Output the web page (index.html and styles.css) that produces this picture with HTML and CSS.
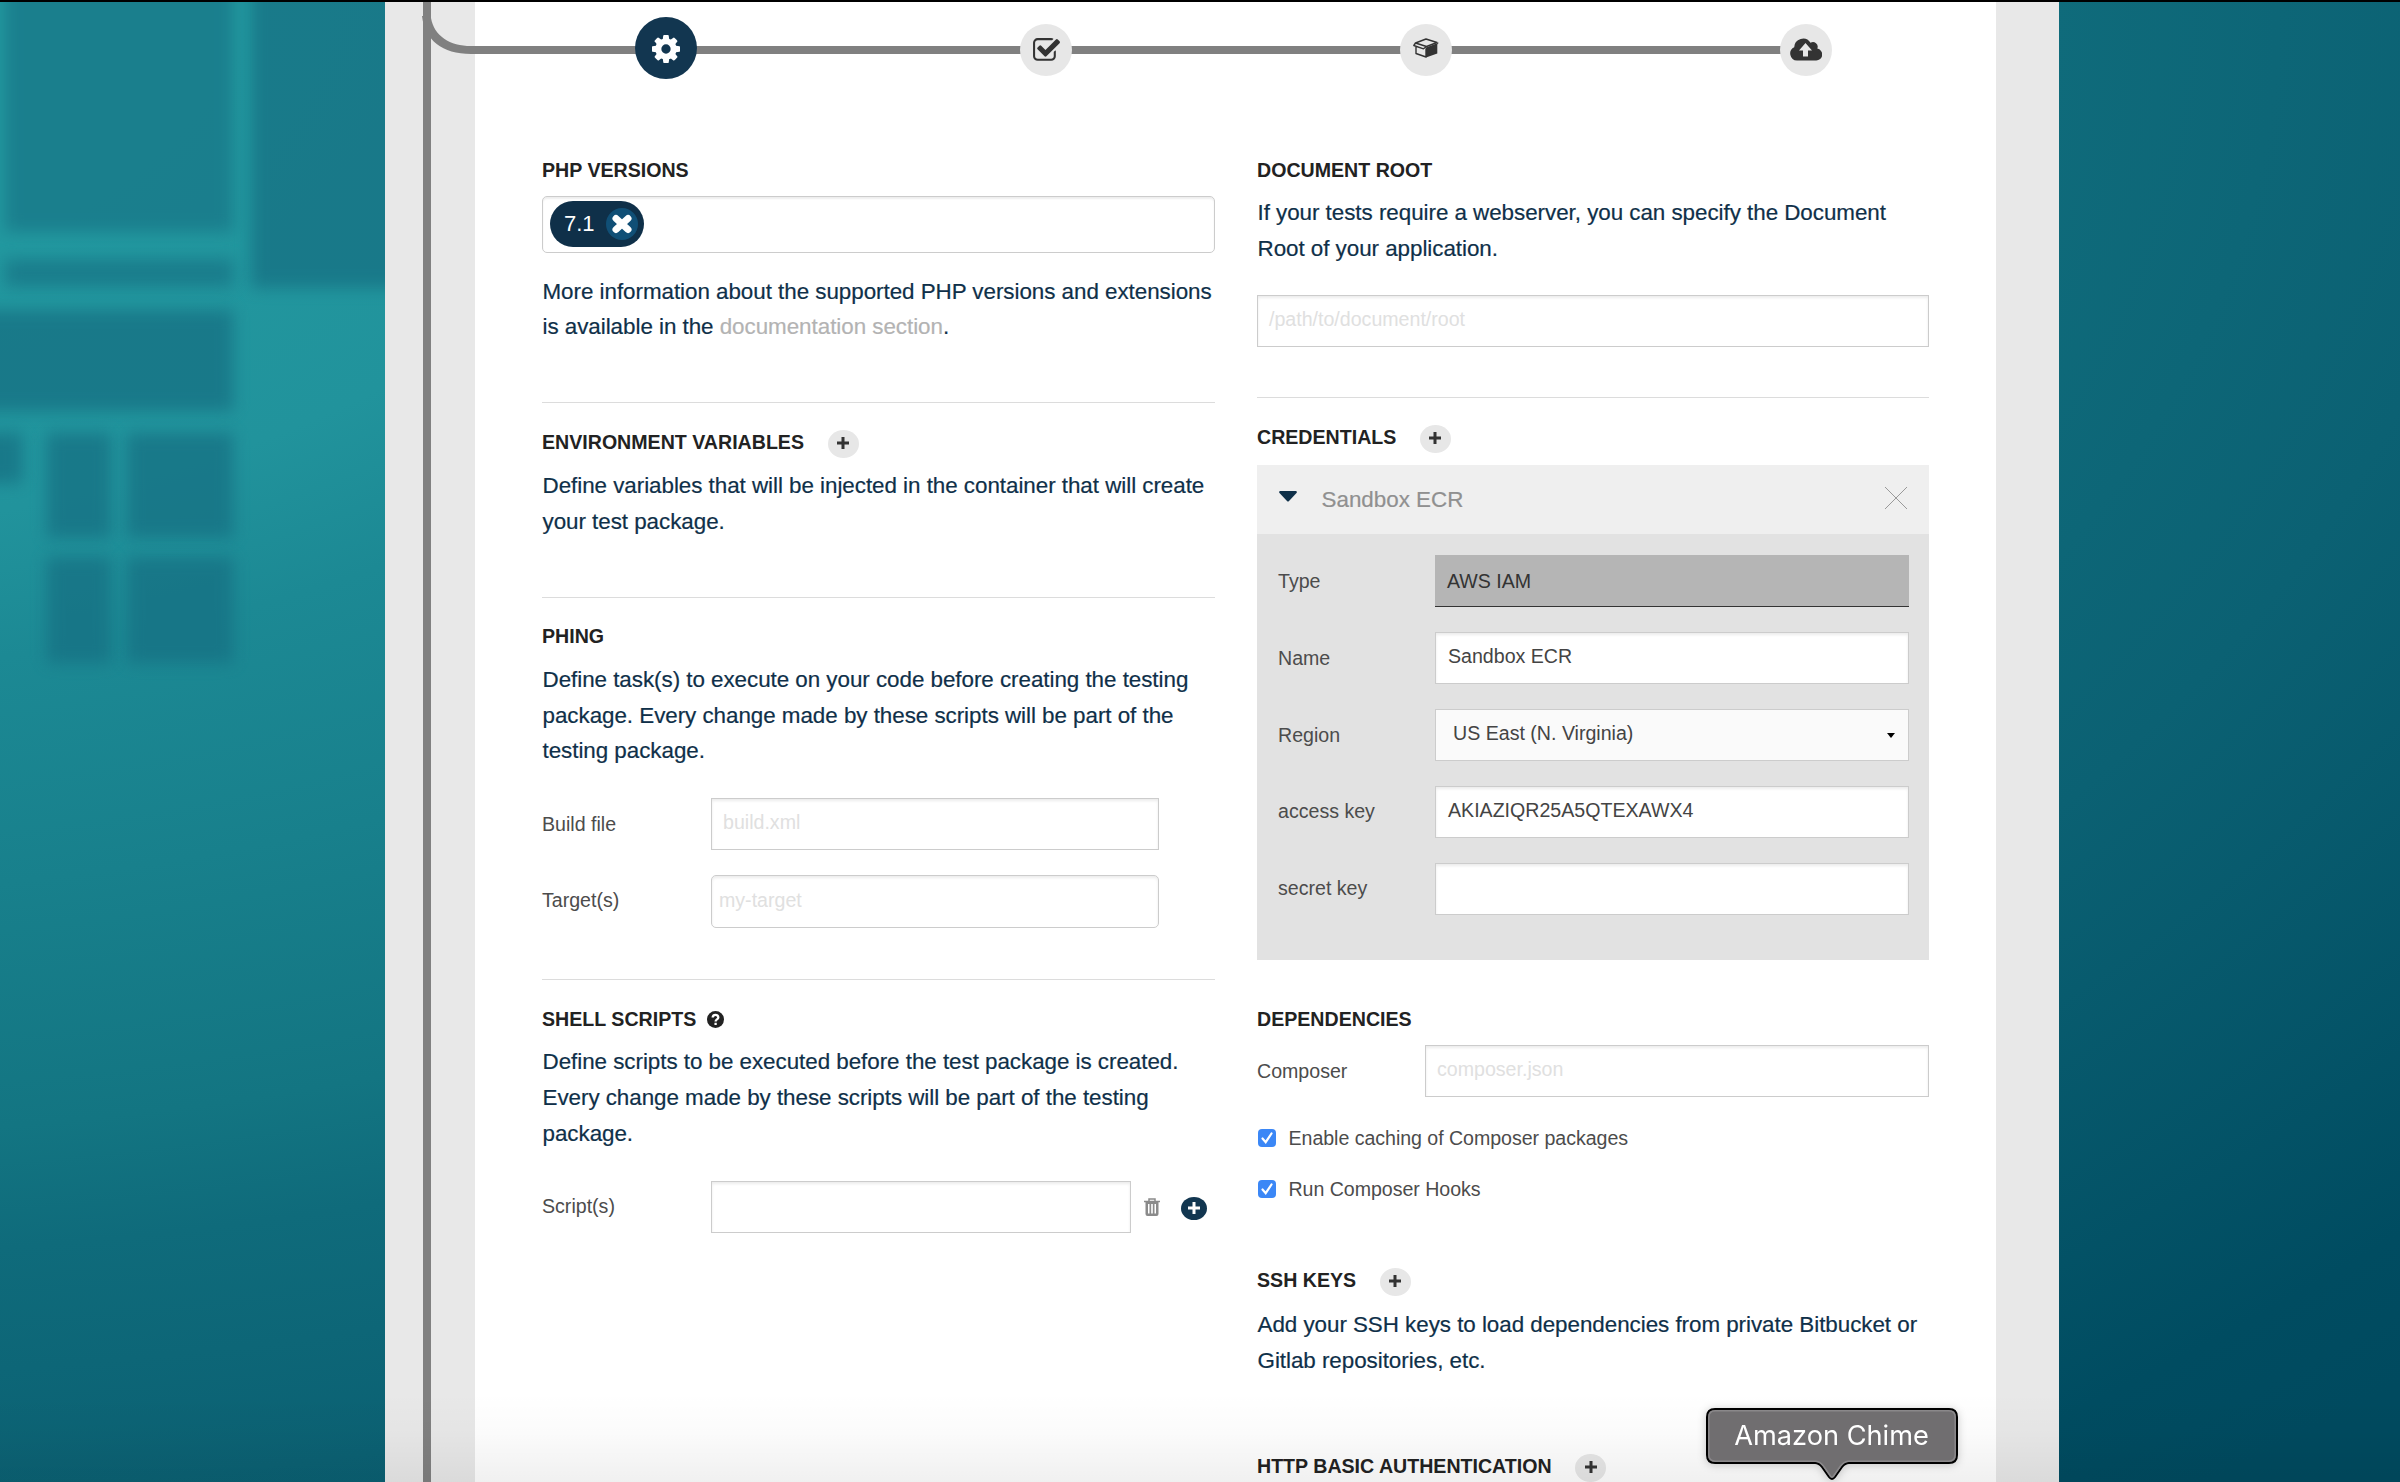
FILE: index.html
```html
<!DOCTYPE html>
<html lang="en">
<head>
<meta charset="utf-8">
<title>Project setup</title>
<link rel="stylesheet" href="styles.css">
</head>
<body>
<div class="backdrop" aria-hidden="true">
  <span class="tile tile-a"></span>
  <span class="tile tile-b"></span>
  <span class="tile tile-c"></span>
  <span class="tile tile-d"></span>
  <span class="tile tile-e"></span>
  <span class="tile tile-f"></span>
  <span class="tile tile-g"></span>
  <span class="tile tile-h"></span>
  <span class="tile tile-i"></span>
</div>

<div class="shell">
  <div class="rail"></div>
  <svg class="branch" viewBox="0 0 56 44" width="56" height="44"><path d="M0 4C3 28 20 42 49 42H56V34H49C28 34 12 24 9 6V0H1V4Z"/></svg>
  <main class="panel">
    <nav class="steps">
      <span class="step step-active"><svg width="28" height="28" viewBox="0 128 1536 1536"><path d="M1024 896q0-106-75-181t-181-75-181 75-75 181 75 181 181 75 181-75 75-181zm512-109v222q0 12-8 23t-20 13l-185 28q-19 54-39 91 35 50 107 138 10 12 10 25t-9 23q-27 37-99 108t-94 71q-12 0-26-9l-138-108q-44 23-91 38-16 136-29 186-7 28-36 28h-222q-14 0-24.500-8.500t-11.500-21.500l-28-184q-49-16-90-37l-141 107q-10 9-25 9-14 0-25-11-126-114-165-168-7-10-7-23 0-12 8-23 15-21 51-66.500t54-70.500q-27-50-41-99l-183-27q-13-2-21-12.500t-8-23.500v-222q0-12 8-23t19-13l186-28q14-46 39-92-40-57-107-138-10-12-10-24 0-10 9-23 26-36 98.500-107.500t94.500-71.500q13 0 26 10l138 107q44-23 91-38 16-136 29-186 7-28 36-28h222q14 0 24.500 8.500t11.500 21.500l28 184q49 16 90 37l142-107q9-9 24-9 13 0 25 10 129 119 165 170 7 8 7 22 0 12-8 23-15 21-51 66.500t-54 70.500q26 50 41 98l183 28q13 2 21 12.500t8 23.500z"/></svg></span>
      <span class="step"><svg width="29" height="29" viewBox="0 0 1792 1792"><path d="M1472 930v318q0 119-84.500 203.500t-203.500 84.500h-832q-119 0-203.500-84.500t-84.500-203.500v-832q0-119 84.500-203.500t203.500-84.500h832q63 0 117 25 15 7 18 23 3 17-9 29l-49 49q-10 10-23 10-3 0-9-2-23-6-45-6h-832q-66 0-113 47t-47 113v832q0 66 47 113t113 47h832q66 0 113-47t47-113v-254q0-13 9-22l64-64q10-10 23-10 6 0 12 3 20 8 20 29zm231-489l-814 814q-24 24-57 24t-57-24l-430-430q-24-24-24-57t24-57l110-110q24-24 57-24t57 24l263 263 647-647q24-24 57-24t57 24l110 110q24 24 24 57t-24 57z"/></svg></span>
      <span class="step step-box"><svg width="26" height="20" viewBox="0 0 26 20"><path d="M2.500 5 13 1 24 4.500 13.500 8.500ZM2.500 5 .8 7.500 10.500 10.800 13.500 8.500M3 8.500V15.500L13 19V10.500" fill="none" stroke="#333" stroke-width="1.400" stroke-linejoin="round"/><path d="M13 9.500 23.500 5.500 26 4.500 24.300 6.500V15.500L13 19.600Z"/></svg></span>
      <span class="step step-cloud"><svg width="32" height="24" viewBox="0 0 32 24"><path fill-rule="evenodd" d="M7 23.500A7 7 0 0 1 4.200 10.200A8.800 8.800 0 0 1 20.500 5.800A4.700 4.700 0 0 1 27.300 11.600A6 6 0 0 1 26 23.500ZM15.500 6 9 13.500H13V19.500H18V13.500H22Z"/></svg></span>
    </nav>

    <div class="columns">
      <div class="column">
        <section class="block block-php">
          <h2 class="title">PHP VERSIONS</h2>
          <div class="tags"><span class="tag">7.1<button class="tag-remove" aria-label="Remove"><svg width="22" height="20" viewBox="0 0 22 20"><path d="M5 4.500 17 15.500M17 4.500 5 15.500" stroke="#fff" stroke-width="7" stroke-linecap="round"/></svg></button></span></div>
          <p class="text">More information about the supported PHP versions and extensions<br>is available in the <a class="link">documentation section</a>.</p>
        </section>

        <section class="block block-env">
          <h2 class="title">ENVIRONMENT VARIABLES <button class="add"><svg width="12" height="12" viewBox="0 0 12 12"><path d="M6 0V12M0 6H12"/></svg></button></h2>
          <p class="text">Define variables that will be injected in the container that will create<br>your test package.</p>
        </section>

        <section class="block block-phing">
          <h2 class="title">PHING</h2>
          <p class="text">Define task(s) to execute on your code before creating the testing<br>package. Every change made by these scripts will be part of the<br>testing package.</p>
          <div class="field field-phing"><label class="label">Build file</label><div class="input placeholder">build.xml</div></div>
          <div class="field field-phing field-target"><label class="label">Target(s)</label><div class="input input-round placeholder">my-target</div></div>
        </section>

        <section class="block block-last">
          <h2 class="title">SHELL SCRIPTS <svg class="help" width="17" height="17" viewBox="0 0 17 17"><circle cx="8.500" cy="8.500" r="8.500" fill="#222"/><path d="M5.700 6.600C5.700 3 11.300 3 11.300 6.400C11.300 8.500 8.600 8.300 8.600 10.500M8.600 11.800V14" fill="none" stroke="#fff" stroke-width="2.300"/></svg></h2>
          <p class="text">Define scripts to be executed before the test package is created.<br>Every change made by these scripts will be part of the testing<br>package.</p>
          <div class="field field-script"><label class="label">Script(s)</label><div class="input"></div>
            <svg class="trash" width="16" height="18" viewBox="0 0 16 18"><path fill="none" stroke="#8a8a8a" stroke-width="1.500" d="M0 3.500H16M5 3V1H11V3"/><path fill="#8a8a8a" fill-rule="evenodd" d="M1.500 4H14.500V16Q14.500 18 12.500 18H3.500Q1.500 18 1.500 16ZM4 6V15.500H5.500V6ZM7.200 6V15.500H8.800V6ZM10.500 6V15.500H12V6Z"/></svg>
            <button class="add add-dark"><svg width="12" height="12" viewBox="0 0 12 12"><path d="M6 0V12M0 6H12"/></svg></button>
          </div>
        </section>
      </div>

      <div class="column">
        <section class="block block-root">
          <h2 class="title">DOCUMENT ROOT</h2>
          <p class="text">If your tests require a webserver, you can specify the Document<br>Root of your application.</p>
          <div class="input placeholder">/path/to/document/root</div>
        </section>

        <section class="block block-credentials">
          <h2 class="title">CREDENTIALS <button class="add"><svg width="12" height="12" viewBox="0 0 12 12"><path d="M6 0V12M0 6H12"/></svg></button></h2>
          <div class="card">
            <div class="card-head">
              <svg class="caret" width="18" height="11" viewBox="0 0 18 11"><path d="M1 0H17Q18.500 .5 17.500 2L10 10Q9 11 8 10L.5 2Q-.5 .5 1 0Z" fill="#0f3049"/></svg>
              <span class="card-name">Sandbox ECR</span>
              <svg class="close" width="22" height="22" viewBox="0 0 22 22"><path d="M0 0 22 22M22 0 0 22" stroke="#999" stroke-width="1"/></svg>
            </div>
            <div class="card-body">
              <div class="field"><label class="label">Type</label><div class="input input-locked">AWS IAM</div></div>
              <div class="field"><label class="label">Name</label><div class="input">Sandbox ECR</div></div>
              <div class="field"><label class="label">Region</label><div class="input input-select">US East (N. Virginia)<svg width="8" height="5" viewBox="0 0 8 5"><path d="M0 0H8L4 5Z"/></svg></div></div>
              <div class="field field-key"><label class="label">access key</label><div class="input">AKIAZIQR25A5QTEXAWX4</div></div>
              <div class="field field-key"><label class="label">secret key</label><div class="input"></div></div>
            </div>
          </div>
        </section>

        <section class="block block-deps">
          <h2 class="title">DEPENDENCIES</h2>
          <div class="field field-composer"><label class="label">Composer</label><div class="input placeholder">composer.json</div></div>
          <label class="check"><span class="box"><svg width="18" height="18" viewBox="0 0 18 18"><path d="M4.500 9.500 7.700 13.200 13.500 4.500"/></svg></span>Enable caching of Composer packages</label>
          <label class="check"><span class="box"><svg width="18" height="18" viewBox="0 0 18 18"><path d="M4.500 9.500 7.700 13.200 13.500 4.500"/></svg></span>Run Composer Hooks</label>
        </section>

        <section class="block block-ssh">
          <h2 class="title">SSH KEYS <button class="add"><svg width="12" height="12" viewBox="0 0 12 12"><path d="M6 0V12M0 6H12"/></svg></button></h2>
          <p class="text">Add your SSH keys to load dependencies from private Bitbucket or<br>Gitlab repositories, etc.</p>
        </section>

        <section class="block block-last">
          <h2 class="title">HTTP BASIC AUTHENTICATION <button class="add"><svg width="12" height="12" viewBox="0 0 12 12"><path d="M6 0V12M0 6H12"/></svg></button></h2>
        </section>
      </div>
    </div>
  </main>
</div>

<div class="dock-shade"></div>
<div class="dock-tip">
  <svg class="dock-tip-shape" width="252" height="74" viewBox="0 0 252 74"><path d="M9 1H243Q251 1 251 9V47Q251 55 243 55H143Q139 55 136 59L129 69Q126 73 123 69L116 59Q113 55 109 55H9Q1 55 1 47V9Q1 1 9 1Z" fill="#706e70" stroke="#000" stroke-width="2"/><path d="M9.500 2.800H242.500Q249.200 2.800 249.200 9.500V46.500Q249.200 53.200 242.500 53.200H142Q138 53.500 134.500 58L127.500 68Q126 70 124.500 68L117.500 58Q114 53.500 110 53.200H9.500Q2.800 53.200 2.800 46.500V9.500Q2.800 2.800 9.500 2.800Z" fill="none" stroke="#8a888a" stroke-width="1.500"/></svg>
  <span class="dock-tip-label">Amazon Chime</span>
</div>
</body>
</html>
```
FILE: styles.css
```css
* { box-sizing: border-box; }

body {
  margin: 0;
  height: 1482px;
  position: relative;
  overflow: hidden;
  font-family: "Liberation Sans", Arial, sans-serif;
  font-size: 19.6px;
  line-height: 28px;
  color: #444;
  background: #0a5f70;
}

button {
  margin: 0;
  padding: 0;
  border: 0;
}

/* Blurred decorative backdrop */
.backdrop {
  position: absolute;
  inset: 0;
  overflow: hidden;
  background:
    radial-gradient(3780px 2000px at -330px 0, #22989f 0%, #22989f 15%, #21939c 27%, #1c8994 34%, #18808c 45%, #137582 57%, #0f6b7b 63%, #0b6173 75%, #004c61 95%, #004a5f 100%);
}

.tile {
  position: absolute;
  background: #167083;
  opacity: .74;
  filter: blur(8px);
}

.tile-a { left: 5px; top: -20px; width: 228px; height: 252px; opacity: .62; }
.tile-b { left: 251px; top: -20px; width: 200px; height: 308px; }
.tile-c { left: 5px; top: 259px; width: 228px; height: 28px; opacity: .66; }
.tile-d { left: -20px; top: 310px; width: 253px; height: 101px; }
.tile-e { left: -20px; top: 433px; width: 42px; height: 50px; }
.tile-f { left: 47px; top: 433px; width: 64px; height: 105px; }
.tile-g { left: 127px; top: 433px; width: 106px; height: 105px; }
.tile-h { left: 47px; top: 557px; width: 64px; height: 106px; }
.tile-i { left: 127px; top: 557px; width: 106px; height: 106px; }

.shell {
  position: relative;
  height: 1482px;
  margin: 0 341px 0 385px;
  padding: 0 63px 0 90px;
  background: #e8e8e8;
}

.rail {
  position: absolute;
  left: 38px;
  top: 0;
  width: 8px;
  height: 100%;
  background: #808080;
}

.branch {
  position: absolute;
  left: 37px;
  top: 12px;
  fill: #808080;
}

.panel {
  height: 1482px;
  background: #fff;
  overflow: hidden;
}

/* Top rule of the browser viewport */
body::after {
  content: "";
  position: absolute;
  left: 0;
  top: 0;
  width: 100%;
  height: 2px;
  background: #000;
}

.steps {
  display: flex;
  align-items: center;
  justify-content: space-between;
  height: 131px;
  padding: 0 164px 31px 160px;
  background: linear-gradient(#808080, #808080) 0 46px / 1331px 8px no-repeat;
}

.step {
  display: flex;
  align-items: center;
  justify-content: center;
  width: 52px;
  height: 52px;
  border-radius: 50%;
  background: #e7e7e7;
  fill: #333;
}

.step-active {
  width: 62px;
  height: 62px;
  margin-top: -4px;
  margin-right: -5px;
  padding: 1px 1px 0 0;
  background: #123650;
  fill: #fff;
}

.step-box { padding-bottom: 5px; }
.step-cloud { padding-bottom: 2px; }

.columns {
  display: grid;
  grid-template-columns: 673px 672px;
  column-gap: 42px;
  padding-left: 67px;
}

.block {
  padding-top: 25px;
  border-bottom: 1px solid #dcdcdc;
}

.block-php { height: 272px; }
.block-env { height: 195px; }
.block-phing { height: 382px; padding-top: 24px; }
.block-root { height: 267px; }
.block-credentials { height: 582px; border: 0; }
.block-deps { height: 261px; border: 0; }
.block-ssh { height: 186px; border: 0; }
.block-last { border: 0; }

.title {
  display: flex;
  align-items: center;
  height: 28px;
  margin: 0;
  font-size: 19.6px;
  line-height: 28px;
  font-weight: bold;
  color: #222;
  white-space: nowrap;
}

.add {
  display: flex;
  align-items: center;
  justify-content: center;
  width: 31px;
  height: 28px;
  margin: 3px 0 0 23.5px;
  padding-bottom: 2px;
  border-radius: 50%;
  background: #e7e7e7;
}

.add path { stroke: #333; stroke-width: 3; fill: none; }

.add-dark {
  width: 26px;
  height: 23px;
  margin: 4px 0 0 21px;
  background: #123650;
}

.add-dark path { stroke: #fff; }

.help { margin-left: 11px; }

.text {
  margin: 12px 0 0;
  padding-left: .5px;
  font-size: 22.4px;
  line-height: 35.7px;
  letter-spacing: -.04px;
  color: #0f3049;
  white-space: nowrap;
  -webkit-text-stroke: .2px currentColor;
}

.block-root .text { margin-top: 11px; }
.block-last .text {
  margin-top: 11px;
  line-height: 35.84px;
}
.block-ssh .text { margin-top: 13px; }

.link { color: #b3b3b3; }

.tags {
  height: 57px;
  margin-top: 12px;
  padding: 4px 7px;
  border: 1px solid #ccc;
  border-radius: 5px;
  background: #fff;
  box-shadow: inset 0 2px 2px rgba(0, 0, 0, .07);
}

.block .tags + .text { margin-top: 20.6px; }

.tag {
  display: flex;
  align-items: center;
  justify-content: space-between;
  width: 94px;
  height: 46px;
  padding: 0 6px 0 14px;
  border-radius: 23px;
  background: #0f3049;
  color: #fff;
  font-size: 22px;
  line-height: 42px;
}

.tag-remove {
  display: flex;
  align-items: center;
  justify-content: center;
  width: 32px;
  height: 32px;
  border-radius: 50%;
  background: #104f76;
}

.input {
  height: 52px;
  padding: 8px 11px 8px 12px;
  border: 1px solid #ccc;
  background: #fff;
  box-shadow: inset 0 2px 3px rgba(0, 0, 0, .08);
  line-height: 31px;
  color: #444;
  white-space: nowrap;
}

.input-round {
  height: 53px;
  padding-left: 7px;
  border-radius: 5px;
}

.placeholder {
  padding-left: 11px;
  color: #e0e0e0;
}

.input-round.placeholder { padding-left: 7px; }

.input-locked {
  padding-top: 11px;
  background: #b5b5b5;
  border: 0;
  border-bottom: 1px solid #333;
  box-shadow: none;
  color: #333;
}

.input-select {
  display: flex;
  align-items: center;
  justify-content: space-between;
  padding: 0 13px 3px 17px;
  background: #fafafa;
  box-shadow: none;
}

.input-select svg { margin-top: 4px; }

.label {
  padding-top: 11px;
  line-height: 31px;
  color: #4c4c4c;
}

.field {
  display: grid;
  grid-template-columns: 157px 474px;
}

.field-phing {
  grid-template-columns: 169px 448px;
  margin-top: 29px;
}

.field-target { margin-top: 25px; }
.field-target .label { padding-top: 10px; }
.field-target .input { padding-top: 9px; }

.field-key .label { padding-top: 10px; }

.field-script {
  grid-template-columns: 169px 420px 29px auto;
  align-items: center;
  justify-content: start;
  margin-top: 29px;
}

.field-script .label {
  align-self: start;
  padding-top: 10px;
}

.trash { margin-left: 13px; }

.text + .input { margin-top: 29px; }

.field-composer {
  grid-template-columns: 168px 504px;
  margin-top: 12px;
}

.card {
  margin-top: 14px;
  background: #e2e2e2;
}

.card-head {
  display: flex;
  align-items: center;
  height: 69px;
  padding: 0 22px;
  background: #efefef;
}

.caret { margin-bottom: 6px; }
.close { margin-bottom: 3px; }

.card-name {
  flex: 1;
  padding-left: 24.5px;
  font-size: 22.4px;
  color: #909090;
  -webkit-text-stroke: .2px currentColor;
}

.card-body {
  display: flex;
  flex-direction: column;
  gap: 25px;
  height: 426px;
  padding: 21px 20px 0 21px;
}

.check {
  display: flex;
  align-items: center;
  gap: 12.5px;
  height: 28px;
  margin-top: 23px;
  padding-left: 1px;
  letter-spacing: -.04px;
  color: #4c4c4c;
}

.field + .check { margin-top: 27px; }

.box {
  width: 18px;
  height: 18px;
  border-radius: 4px;
  background: #3b87f6;
}

.box svg {
  display: block;
  fill: none;
  stroke: #fff;
  stroke-width: 2.200;
  stroke-linecap: round;
}

/* Desktop overlay at the bottom edge */
.dock-shade {
  position: absolute;
  left: 0;
  right: 0;
  bottom: 0;
  height: 90px;
  background: linear-gradient(rgba(0, 0, 0, 0), rgba(0, 0, 0, .015) 45%, rgba(0, 0, 0, .06));
}

.dock-tip {
  position: absolute;
  left: 1706px;
  top: 1408px;
  width: 252px;
  height: 74px;
  filter: drop-shadow(0 1px 4px rgba(0, 0, 0, .2));
}

.dock-tip-shape {
  position: absolute;
  left: 0;
  top: 0;
}

.dock-tip-label {
  position: absolute;
  left: 0;
  top: 0;
  width: 251px;
  text-align: center;
  font-family: Inter, sans-serif;
  font-size: 27.2px;
  line-height: 56px;
  color: #fff;
  white-space: nowrap;
}
```
